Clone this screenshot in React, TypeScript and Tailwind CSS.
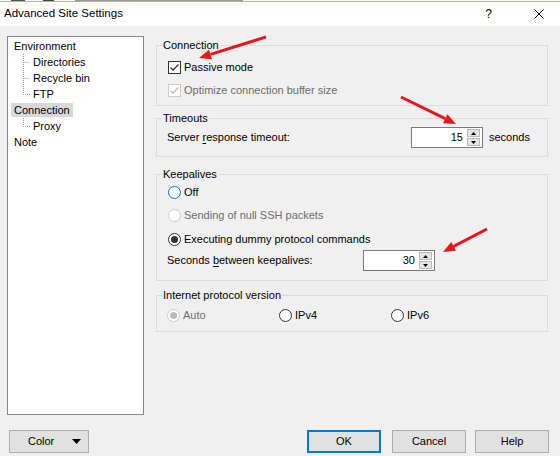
import React from "react";

type BoxProps = { checked?: boolean; disabled?: boolean; focus?: boolean };

function CheckBox({ checked, disabled }: BoxProps) {
  return (
    <span
      className={`w-[13px] h-[13px] flex-shrink-0 border bg-white flex items-center justify-center ${
        disabled ? "border-[#cccccc]" : "border-[#333333]"
      }`}
    >
      {checked && (
        <svg width="11" height="11" viewBox="0 0 11 11">
          <path
            d="M1.5 5.5 L4 8 L9.5 2.5"
            fill="none"
            stroke={disabled ? "#bcbcbc" : "#333333"}
            strokeWidth="1.3"
          />
        </svg>
      )}
    </span>
  );
}

function Radio({ checked, disabled, focus }: BoxProps) {
  const border = disabled ? "border-[#cccccc]" : focus ? "border-[#0078d7]" : "border-[#333333]";
  return (
    <span
      className={`w-[13px] h-[13px] flex-shrink-0 rounded-full border bg-white flex items-center justify-center ${border}`}
    >
      {checked && (
        <span className={`w-[7px] h-[7px] rounded-full ${disabled ? "bg-[#bcbcbc]" : "bg-[#333333]"}`} />
      )}
    </span>
  );
}

function SpinBox({ value }: { value: string }) {
  return (
    <div className="w-[72px] h-[21px] border border-[#7a7a7a] bg-white flex items-stretch flex-shrink-0">
      <span className="flex-1 text-right pr-[4px] leading-[19px]">{value}</span>
      <div className="w-[13px] mr-[2px] py-[1px] flex flex-col gap-[1px]">
        <div className="h-[8px] bg-[#e5e5e5] border border-[#b9b9b9] flex items-center justify-center">
          <svg width="5" height="3" viewBox="0 0 5 3">
            <path d="M0 3 L2.5 0 L5 3 Z" fill="#000" />
          </svg>
        </div>
        <div className="h-[8px] bg-[#e5e5e5] border border-[#b9b9b9] flex items-center justify-center">
          <svg width="5" height="3" viewBox="0 0 5 3">
            <path d="M0 0 L5 0 L2.5 3 Z" fill="#000" />
          </svg>
        </div>
      </div>
    </div>
  );
}

function Group({ title, className, children }: { title: string; className?: string; children: React.ReactNode }) {
  return (
    <fieldset className={`border border-[#dcdcdc] ${className ?? ""}`}>
      <legend className="ml-[5px] px-[1px] leading-[13px]">{title}</legend>
      {children}
    </fieldset>
  );
}

const tree = [
  { label: "Environment", level: 0 },
  { label: "Directories", level: 1 },
  { label: "Recycle bin", level: 1 },
  { label: "FTP", level: 1, last: true },
  { label: "Connection", level: 0, selected: true },
  { label: "Proxy", level: 1, last: true },
  { label: "Note", level: 0 },
];

function Arrow({ x1, y1, x2, y2 }: { x1: number; y1: number; x2: number; y2: number }) {
  const dx = x2 - x1;
  const dy = y2 - y1;
  const len = Math.hypot(dx, dy);
  const ux = dx / len;
  const uy = dy / len;
  const bx = x2 - ux * 12;
  const by = y2 - uy * 12;
  const px = -uy * 5;
  const py = ux * 5;
  return (
    <g>
      <line x1={x1} y1={y1} x2={bx} y2={by} stroke="#e8161b" strokeWidth="3" />
      <polygon points={`${x2},${y2} ${bx + px},${by + py} ${bx - px},${by - py}`} fill="#e8161b" />
    </g>
  );
}

export default function App() {
  return (
    <div className="w-[560px] h-[456px] bg-[#f0f0f0] relative overflow-hidden font-['Liberation_Sans',Arial,sans-serif] text-[11px] text-black">
      {/* window behind */}
      <div className="h-[1px] bg-[#fafafa] flex">
        <span className="ml-[11px] w-[14px] bg-[#555]" />
        <span className="ml-[18px] w-[11px] bg-[#444]" />
        <span className="ml-[21px] w-[168px] bg-[#9a9a9a]" />
      </div>
      <div className="h-[1px] bg-[#e6a56c]" />

      {/* title bar */}
      <div className="h-[24px] bg-white flex items-center pl-[4px]">
        <span className="text-[11.5px]">Advanced Site Settings</span>
        <span className="ml-auto text-[12px] mr-[42px]">?</span>
        <svg width="10" height="10" viewBox="0 0 10 10" className="mr-[16px]">
          <path d="M0.5 0.5 L9.5 9.5 M9.5 0.5 L0.5 9.5" stroke="#000" strokeWidth="1" />
        </svg>
      </div>

      <div className="flex pl-[7px] pt-[10px]">
        {/* tree */}
        <div className="w-[137px] h-[379px] border border-[#828790] bg-white pt-[1px]">
          {tree.map((t) => (
            <div key={t.label} className="h-[16px] flex items-center">
              {t.level === 1 && (
                <svg width="22" height="16" viewBox="0 0 22 16" className="flex-shrink-0">
                  <path
                    d={t.last ? "M15.5 0 V8.5 H22" : "M15.5 0 V16 M15.5 8.5 H22"}
                    fill="none"
                    stroke="#a0a0a0"
                    strokeDasharray="1 1"
                  />
                </svg>
              )}
              <span
                className={`px-[3px] leading-[14px] ${t.level === 0 ? "ml-[3px]" : ""} ${
                  t.selected ? "bg-[#d9d9d9]" : ""
                }`}
              >
                {t.label}
              </span>
            </div>
          ))}
        </div>

        {/* pages */}
        <div className="ml-[12px] w-[392px] pt-[3px] flex flex-col">
          <Group title="Connection">
            <div className="pl-[11px] pt-[7px] pb-[7px] flex flex-col">
              <label className="h-[16px] flex items-center gap-[3px]">
                <CheckBox checked />
                <span>Passive mode</span>
              </label>
              <label className="mt-[7px] h-[16px] flex items-center gap-[3px] text-[#6d6d6d]">
                <CheckBox checked disabled />
                <span>Optimize connection buffer size</span>
              </label>
            </div>
          </Group>

          <Group title="Timeouts" className="mt-[6px]">
            <div className="pl-[10px] pt-[2px] pb-[8px] flex items-center">
              <span className="w-[244px]">
                Server <span className="underline underline-offset-2">r</span>esponse timeout:
              </span>
              <SpinBox value="15" />
              <span className="ml-[6px]">seconds</span>
            </div>
          </Group>

          <Group title="Keepalives" className="mt-[11px]">
            <div className="pl-[10px] pt-[3px] pb-[9px] flex flex-col">
              <label className="ml-[1px] h-[16px] flex items-center gap-[3px]">
                <Radio focus />
                <span>Off</span>
              </label>
              <label className="ml-[1px] mt-[7px] h-[16px] flex items-center gap-[3px] text-[#6d6d6d]">
                <Radio disabled />
                <span>Sending of null SSH packets</span>
              </label>
              <label className="ml-[1px] mt-[8px] h-[16px] flex items-center gap-[3px]">
                <Radio checked />
                <span>Executing dummy protocol commands</span>
              </label>
              <div className="mt-[3px] flex items-center">
                <span className="w-[196px]">
                  Seconds <span className="underline underline-offset-2">b</span>etween keepalives:
                </span>
                <SpinBox value="30" />
              </div>
            </div>
          </Group>

          <Group title="Internet protocol version" className="mt-[8px]">
            <div className="pl-[10px] pt-[5px] pb-[8px] flex">
              <label className="w-[112px] h-[16px] flex items-center gap-[3px] text-[#6d6d6d]">
                <Radio checked disabled />
                <span>Auto</span>
              </label>
              <label className="w-[112px] h-[16px] flex items-center gap-[3px]">
                <Radio />
                <span>IPv4</span>
              </label>
              <label className="w-[112px] h-[16px] flex items-center gap-[3px]">
                <Radio />
                <span>IPv6</span>
              </label>
            </div>
          </Group>
        </div>
      </div>

      {/* buttons */}
      <div className="mt-[15px] flex items-center pl-[9px] pr-[11px]">
        <button className="w-[80px] h-[23px] bg-[#e1e1e1] border border-[#adadad] flex items-center pl-[18px] pr-[4px]">
          <span>Color</span>
          <svg width="9" height="5" viewBox="0 0 9 5" className="ml-auto mr-[3px]">
            <path d="M0 0 H9 L4.5 5 Z" fill="#000" />
          </svg>
        </button>
        <button className="ml-auto w-[74px] h-[23px] bg-[#e1e1e1] border-2 border-[#0078d7]">OK</button>
        <button className="ml-[11px] w-[74px] h-[23px] bg-[#e1e1e1] border border-[#adadad]">Cancel</button>
        <button className="ml-[9px] w-[74px] h-[23px] bg-[#e1e1e1] border border-[#adadad]">Help</button>
      </div>

      {/* annotation arrows */}
      <svg className="absolute inset-0 pointer-events-none" width="560" height="456">
        <Arrow x1={266} y1={37} x2={199} y2={58} />
        <Arrow x1={401} y1={97} x2={456} y2={124} />
        <Arrow x1={487} y1={229} x2={443} y2={252} />
      </svg>
    </div>
  );
}
